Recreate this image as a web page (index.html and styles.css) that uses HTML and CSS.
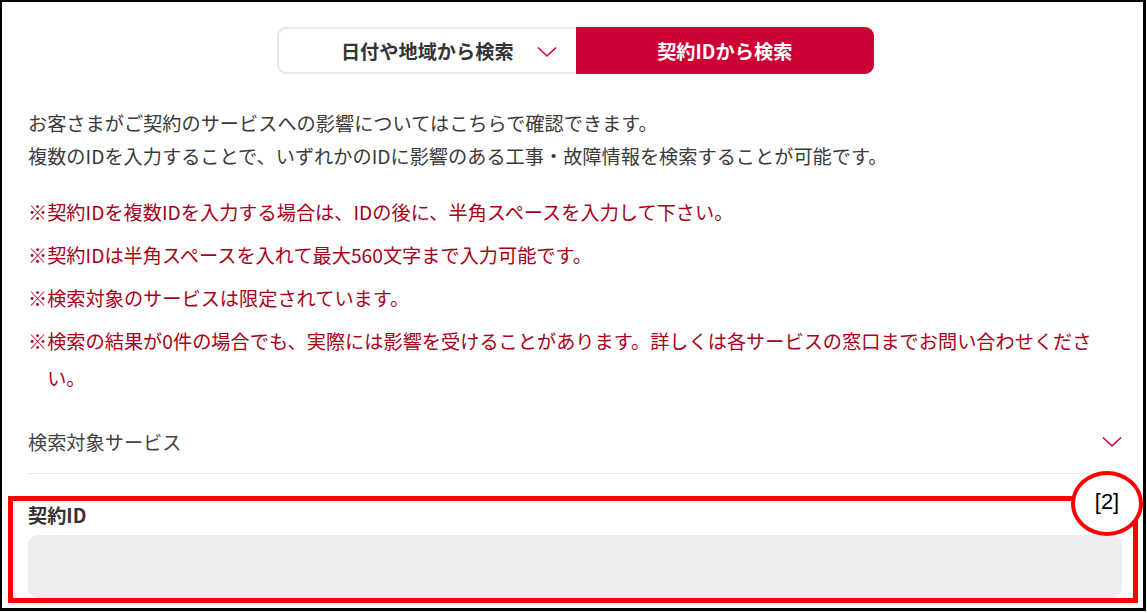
FILE: index.html
```html
<!DOCTYPE html>
<html lang="ja">
<head>
<meta charset="utf-8">
<title>契約IDから検索</title>
<link rel="stylesheet" href="styles.css">
</head>
<body>
<div class="frame">
  <div class="tabs">
    <div class="tab tab-off">
      <span class="tab-label">日付や地域から検索</span>
      <svg class="tab-chev" width="20" height="12" viewBox="0 0 20 12"><path d="M1 1.5 L10 10 L19 1.5" fill="none" stroke="#cc0033" stroke-width="1.6"/></svg>
    </div>
    <div class="tab tab-on">契約IDから検索</div>
  </div>

  <div class="intro">
    <p>お客さまがご契約のサービスへの影響についてはこちらで確認できます。</p>
    <p>複数のIDを入力することで、いずれかのIDに影響のある工事・故障情報を検索することが可能です。</p>
  </div>

  <ul class="notes">
    <li>※契約IDを複数IDを入力する場合は、IDの後に、半角スペースを入力して下さい。</li>
    <li>※契約IDは半角スペースを入れて最大560文字まで入力可能です。</li>
    <li>※検索対象のサービスは限定されています。</li>
    <li>※検索の結果が0件の場合でも、実際には影響を受けることがあります。詳しくは各サービスの窓口までお問い合わせください。</li>
  </ul>

  <div class="accordion">
    <span class="acc-label">検索対象サービス</span>
    <svg class="acc-chev" width="20" height="12" viewBox="0 0 20 12"><path d="M1 1.5 L10 10 L19 1.5" fill="none" stroke="#cc0033" stroke-width="1.6"/></svg>
  </div>

  <div class="field-label">契約ID</div>
  <div class="field-input"></div>

  <div class="mark-rect"></div>
  <div class="mark-circle">[2]</div>
</div>
</body>
</html>
```

FILE: styles.css
```css
* { box-sizing: border-box; }
html, body { margin: 0; padding: 0; background: #fff; }
body {
  font-family: "Noto Sans CJK JP", "Noto Sans", sans-serif;
  color: #333;
}
.frame {
  position: relative;
  width: 1146px;
  height: 611px;
  border-style: solid;
  border-color: #000;
  border-width: 2px 3px 3px 2px;
  padding: 25px 21px 0 26px;
}
.tabs {
  display: flex;
  width: 597px;
  height: 47px;
  margin: 0 auto;
}
.tab {
  flex: 1 1 0;
  font-size: 19.2px;
  font-weight: 700;
}
.tab-off {
  display: grid;
  grid-template-columns: 1fr auto 1fr;
  align-items: center;
  border: 2px solid #e8e8e8;
  border-right: none;
  border-radius: 9px 0 0 9px;
  color: #333;
}
.tab-label { grid-column: 2; }
.tab-chev { grid-column: 3; justify-self: end; margin-right: 19px; margin-top: 2px; }
.tab-on {
  display: flex;
  align-items: center;
  justify-content: center;
  background: #cc0033;
  color: #fff;
  border-radius: 0 9px 9px 0;
}
.intro { margin-top: 33px; }
.intro p {
  margin: 0;
  font-size: 19.2px;
  line-height: 33px;
  color: #3a3a3a;
}
.notes {
  list-style: none;
  margin: 21px 0 0;
  padding: 0;
}
.notes li {
  font-size: 19.2px;
  line-height: 37px;
  color: #a80018;
  padding-left: 1em;
  text-indent: -1em;
  margin-top: 6px;
}
.notes li:first-child { margin-top: 0; }
.accordion {
  display: flex;
  align-items: center;
  justify-content: space-between;
  margin-top: 14px;
  padding: 16px 0;
  border-bottom: 1px solid #e6e6e6;
}
.acc-label {
  font-size: 19.2px;
  line-height: 30px;
  color: #444;
}
.acc-chev { margin-right: 0; margin-top: 0; }
.field-label {
  margin-top: 28px;
  font-size: 19.2px;
  line-height: 26px;
  font-weight: 700;
  color: #333;
}
.field-input {
  margin-top: 7px;
  height: 63px;
  background: #eeeeee;
  border-radius: 10px;
}
.mark-rect {
  position: absolute;
  left: 6px;
  top: 494px;
  width: 1130px;
  height: 107px;
  border: 5px solid #ff0000;
}
.mark-circle {
  position: absolute;
  left: 1069px;
  top: 469px;
  width: 72px;
  height: 65px;
  border: 4px solid #ff0000;
  border-radius: 50%;
  background: #fff;
  display: flex;
  align-items: center;
  justify-content: center;
  font-family: "Liberation Sans", "DejaVu Sans", sans-serif;
  font-size: 22px;
  color: #000;
  padding-bottom: 4px;
}
```
